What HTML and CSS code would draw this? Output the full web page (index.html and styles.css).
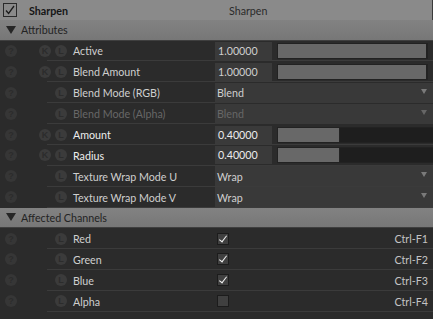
FILE: index.html
```html
<!DOCTYPE html>
<html lang="en">
<head>
    <meta charset="UTF-8">
    <title>Sharpen - Attributes</title>
    <link rel="stylesheet" href="styles.css">
</head>
<body>
<div class="panel">

    <div class="titlebar">
        <span class="title-check">
            <svg width="12" height="12" viewBox="0 0 12 12"><path d="M2 6.5 L4.6 9.5 L10 2" fill="none" stroke="#1c1c1c" stroke-width="1.3"/></svg>
        </span>
        <span class="title">Sharpen</span>
        <span class="subtitle">Sharpen</span>
    </div>

    <div class="group"><span class="tri"></span>Attributes</div>

    <div class="row">
        <span class="icons"><i class="ico help">?</i><i class="ico key">K</i><i class="ico">L</i></span>
        <span class="label">Active</span>
        <span class="control">
            <span class="field">1.00000</span>
            <span class="slider"><span class="fill" style="width:100%"></span></span>
        </span>
    </div>

    <div class="row">
        <span class="icons"><i class="ico help">?</i><i class="ico key">K</i><i class="ico">L</i></span>
        <span class="label">Blend Amount</span>
        <span class="control">
            <span class="field">1.00000</span>
            <span class="slider"><span class="fill" style="width:100%"></span></span>
        </span>
    </div>

    <div class="row">
        <span class="icons"><i class="ico help">?</i><i class="ico key blank"></i><i class="ico">L</i></span>
        <span class="label">Blend Mode (RGB)</span>
        <span class="control">
            <span class="dropdown">Blend<span class="arrow"></span></span>
        </span>
    </div>

    <div class="row disabled">
        <span class="icons"><i class="ico help">?</i><i class="ico key blank"></i><i class="ico">L</i></span>
        <span class="label">Blend Mode (Alpha)</span>
        <span class="control">
            <span class="dropdown">Blend<span class="arrow"></span></span>
        </span>
    </div>

    <div class="row active">
        <span class="icons"><i class="ico help">?</i><i class="ico key">K</i><i class="ico">L</i></span>
        <span class="label">Amount</span>
        <span class="control">
            <span class="field">0.40000</span>
            <span class="slider track"><span class="fill" style="width:40%"></span></span>
        </span>
    </div>

    <div class="row active">
        <span class="icons"><i class="ico help">?</i><i class="ico key">K</i><i class="ico">L</i></span>
        <span class="label">Radius</span>
        <span class="control">
            <span class="field">0.40000</span>
            <span class="slider track"><span class="fill" style="width:40%"></span></span>
        </span>
    </div>

    <div class="row">
        <span class="icons"><i class="ico help">?</i><i class="ico key blank"></i><i class="ico">L</i></span>
        <span class="label">Texture Wrap Mode U</span>
        <span class="control">
            <span class="dropdown">Wrap<span class="arrow"></span></span>
        </span>
    </div>

    <div class="row">
        <span class="icons"><i class="ico help">?</i><i class="ico key blank"></i><i class="ico">L</i></span>
        <span class="label">Texture Wrap Mode V</span>
        <span class="control">
            <span class="dropdown">Wrap<span class="arrow"></span></span>
        </span>
    </div>

    <div class="group"><span class="tri"></span>Affected Channels</div>

    <div class="row">
        <span class="icons"><i class="ico help">?</i><i class="ico key blank"></i><i class="ico">L</i></span>
        <span class="label">Red</span>
        <span class="control channel">
            <span class="box checked"></span>
            <span class="shortcut">Ctrl-F1</span>
        </span>
    </div>

    <div class="row">
        <span class="icons"><i class="ico help">?</i><i class="ico key blank"></i><i class="ico">L</i></span>
        <span class="label">Green</span>
        <span class="control channel">
            <span class="box checked"></span>
            <span class="shortcut">Ctrl-F2</span>
        </span>
    </div>

    <div class="row">
        <span class="icons"><i class="ico help">?</i><i class="ico key blank"></i><i class="ico">L</i></span>
        <span class="label">Blue</span>
        <span class="control channel">
            <span class="box checked"></span>
            <span class="shortcut">Ctrl-F3</span>
        </span>
    </div>

    <div class="row">
        <span class="icons"><i class="ico help">?</i><i class="ico key blank"></i><i class="ico">L</i></span>
        <span class="label">Alpha</span>
        <span class="control channel">
            <span class="box"></span>
            <span class="shortcut">Ctrl-F4</span>
        </span>
    </div>

</div>
</body>
</html>
```

FILE: styles.css
```css
/* General */
html, body {
    margin: 0;
    padding: 0;
    background: #2b2b2b;
}

.panel {
    width: 433px;
    height: 319px;
    overflow: hidden;
    font-family: 'Lato', 'Liberation Sans', sans-serif;
    font-size: 10.7px;
    color: #cfcfcf;
    background: #2b2b2b;
}

/* Title bar */
.titlebar {
    height: 20px;
    display: flex;
    align-items: center;
    background: #8a8a8a;
    border-right: 1px solid #3a3a3a;
    box-sizing: border-box;
}

.title-check {
    width: 14px;
    height: 14px;
    box-sizing: border-box;
    margin-left: 3px;
    border: 1px solid #2a2a2a;
    display: flex;
    align-items: center;
    justify-content: center;
}

.title {
    margin-left: 12px;
    width: 200px;
    font-weight: bold;
    color: #151515;
}

.subtitle {
    color: #2a2a2a;
}

/* Group headers */
.group {
    height: 20.5px;
    display: flex;
    align-items: center;
    background: linear-gradient(#828282, #777777);
    border-bottom: 1px solid #3f3f3f;
    box-sizing: border-box;
    color: #232323;
}

.tri {
    width: 0;
    height: 0;
    margin: 0 5px 0 6px;
    border-left: 5.5px solid transparent;
    border-right: 5.5px solid transparent;
    border-top: 8px solid #262626;
}

/* Rows */
.row {
    height: 20.9px;
    display: flex;
    align-items: center;
    box-sizing: border-box;
    background: linear-gradient(#3b3b3b, #3b3b3b) no-repeat 47px 100% / 100% 1px;
}

.icons {
    width: 73px;
    display: flex;
    align-items: center;
    flex-shrink: 0;
}

.ico {
    width: 12px;
    height: 12px;
    border-radius: 50%;
    background: #3b3b3b;
    color: #2c2c2c;
    font-style: normal;
    font-weight: bold;
    font-size: 9px;
    line-height: 12px;
    text-align: center;
    font-family: 'Liberation Sans', sans-serif;
}

.ico.help {
    margin-left: 5px;
    background: #363636;
}

.ico.key {
    margin: 0 4px 0 22px;
}

.ico.blank {
    background: none;
}

.label {
    width: 142px;
    flex-shrink: 0;
}

.control {
    flex: 1;
    display: flex;
    align-items: center;
    height: 100%;
}

.field {
    width: 57px;
    height: 18px;
    box-sizing: border-box;
    padding-left: 3px;
    line-height: 18px;
    background: #3a3a3a;
}

.slider {
    width: 151px;
    height: 16px;
    margin-left: 5px;
    box-sizing: border-box;
    border: 1px solid #222222;
    background: #1e1e1e;
}

.slider.track {
    width: 156px;
    border-right: none;
}

.fill {
    display: block;
    height: 100%;
    background: #686868;
    border-right: 1px solid #222222;
    box-sizing: border-box;
}

.active .label,
.active .field {
    color: #ededed;
}

.dropdown {
    flex: 1;
    height: 20px;
    display: flex;
    align-items: center;
    padding-left: 2px;
    background: #393939;
}

.arrow {
    margin-left: auto;
    margin-right: 6px;
    margin-top: -3px;
    width: 0;
    height: 0;
    border-left: 3.5px solid transparent;
    border-right: 3.5px solid transparent;
    border-top: 5px solid #7a7a7a;
}

.disabled .label,
.disabled .dropdown {
    color: #676767;
}

.disabled .arrow {
    border-top-color: #666666;
}

/* Channels */
.channel {
    padding: 0 5px 0 2px;
}

.box {
    width: 12px;
    height: 12px;
    box-sizing: border-box;
    border: 1px solid #1c1c1c;
    background: #404040;
    display: flex;
    align-items: center;
    justify-content: center;
}

.box.checked::after {
    content: "";
    width: 3px;
    height: 7px;
    margin-top: -2px;
    border-right: 1.5px solid #f2f2f2;
    border-bottom: 1.5px solid #f2f2f2;
    transform: rotate(38deg);
}

.shortcut {
    margin-left: auto;
    color: #c4c4c4;
}
```
